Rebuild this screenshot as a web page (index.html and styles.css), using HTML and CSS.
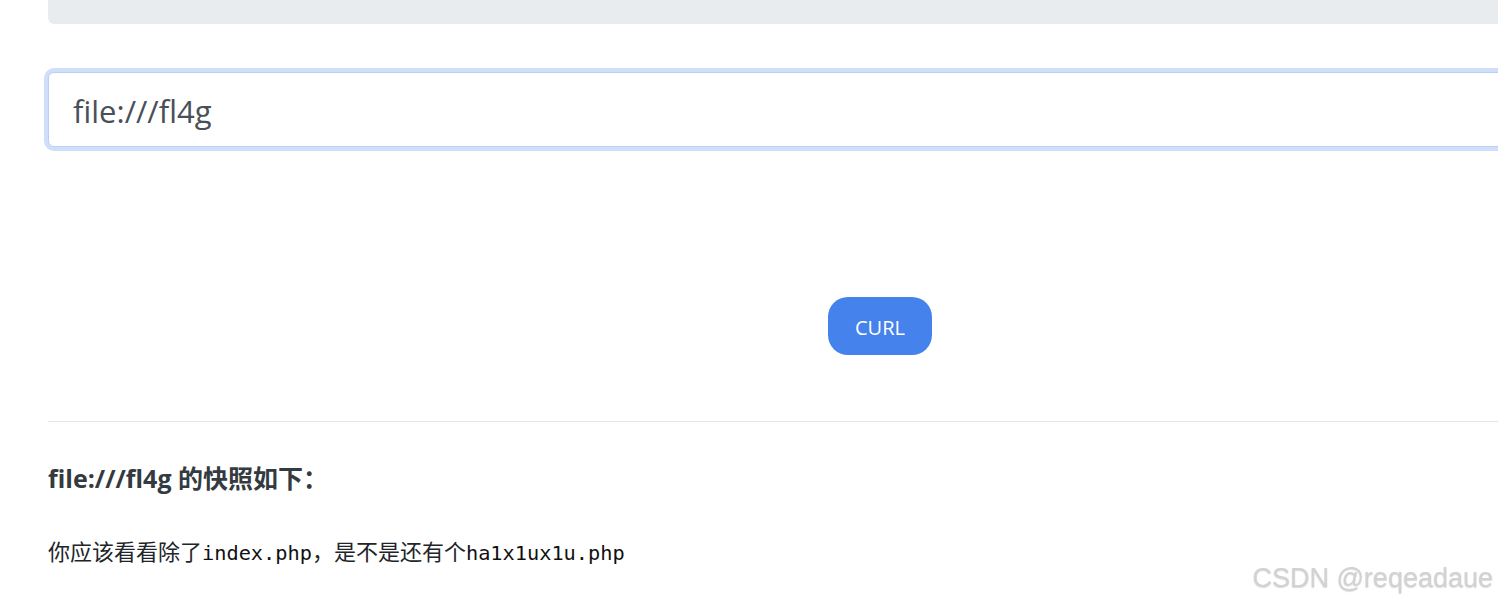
FILE: index.html
```html
<!DOCTYPE html>
<html lang="zh">
<head>
<meta charset="utf-8">
<title>CURL</title>
<link rel="stylesheet" href="styles.css">
</head>
<body>
<div class="container">
  <div class="topbar"></div>
  <form class="form">
    <input class="url-input" type="text" value="file:///fl4g">
    <div class="actions">
      <button class="btn" type="button">CURL</button>
    </div>
  </form>
  <hr class="rule">
  <h3 class="title">file:///fl4g 的快照如下：</h3>
  <p class="result">你应该看看除了<code>index.php</code>，是不是还有个<code>ha1x1ux1u.php</code></p>
</div>
<div class="watermark">CSDN @reqeadaue</div>
</body>
</html>
```
FILE: styles.css
```css
html, body {
  margin: 0;
  padding: 0;
  overflow: hidden;
  background: #ffffff;
}
body {
  width: 1498px;
  height: 602px;
  position: relative;
  font-family: "Noto Sans", "Noto Sans CJK SC", sans-serif;
  color: #343a40;
}
.container {
  margin-left: 48px;
  width: 1664px;
}
.topbar {
  height: 24px;
  background: #e9ecef;
  border-radius: 0 0 6px 6px;
}
.form {
  margin: 48px 0 0 0;
}
.url-input {
  display: block;
  box-sizing: border-box;
  width: 100%;
  height: 75px;
  margin: 0;
  padding: 2px 24px 0 24px;
  border: 1px solid #b9d0f6;
  border-radius: 6px;
  box-shadow: 0 0 0 4px #cfdff9;
  outline: none;
  font-family: "Open Sans", "Noto Sans", sans-serif;
  font-size: 31px;
  color: #495057;
  background: #fff;
}
.actions {
  display: flex;
  justify-content: center;
  padding-top: 150px;
}
.btn {
  width: 104px;
  height: 58px;
  border: none;
  border-radius: 20px;
  background: #4582ec;
  color: #ffffff;
  font-family: "Open Sans", "Noto Sans", sans-serif;
  font-size: 20px;
  padding: 3px 0 0 0;
}
.rule {
  margin: 66px 0 0 0;
  border: 0;
  border-top: 1px solid #e5e5e5;
  height: 0;
}
.title {
  margin: 40px 0 0 0;
  font-size: 25px;
  line-height: 32px;
  font-weight: 700;
  font-family: "Open Sans", "Noto Sans CJK SC", sans-serif;
  color: #333a40;
}
.result {
  margin: 41px 0 0 0;
  font-size: 22px;
  line-height: 30px;
  font-family: "Noto Sans CJK SC", sans-serif;
  color: #212529;
}
.result code {
  font-family: "DejaVu Sans Mono", "Liberation Mono", monospace;
  font-size: 20.3px;
  color: #111;
}
.watermark {
  position: absolute;
  right: 5px;
  bottom: 8px;
  font-family: "Liberation Sans", Arial, sans-serif;
  font-size: 27px;
  color: #d2d2d2;
  text-shadow: 0 1px 1px rgba(0,0,0,0.15);
}
```
